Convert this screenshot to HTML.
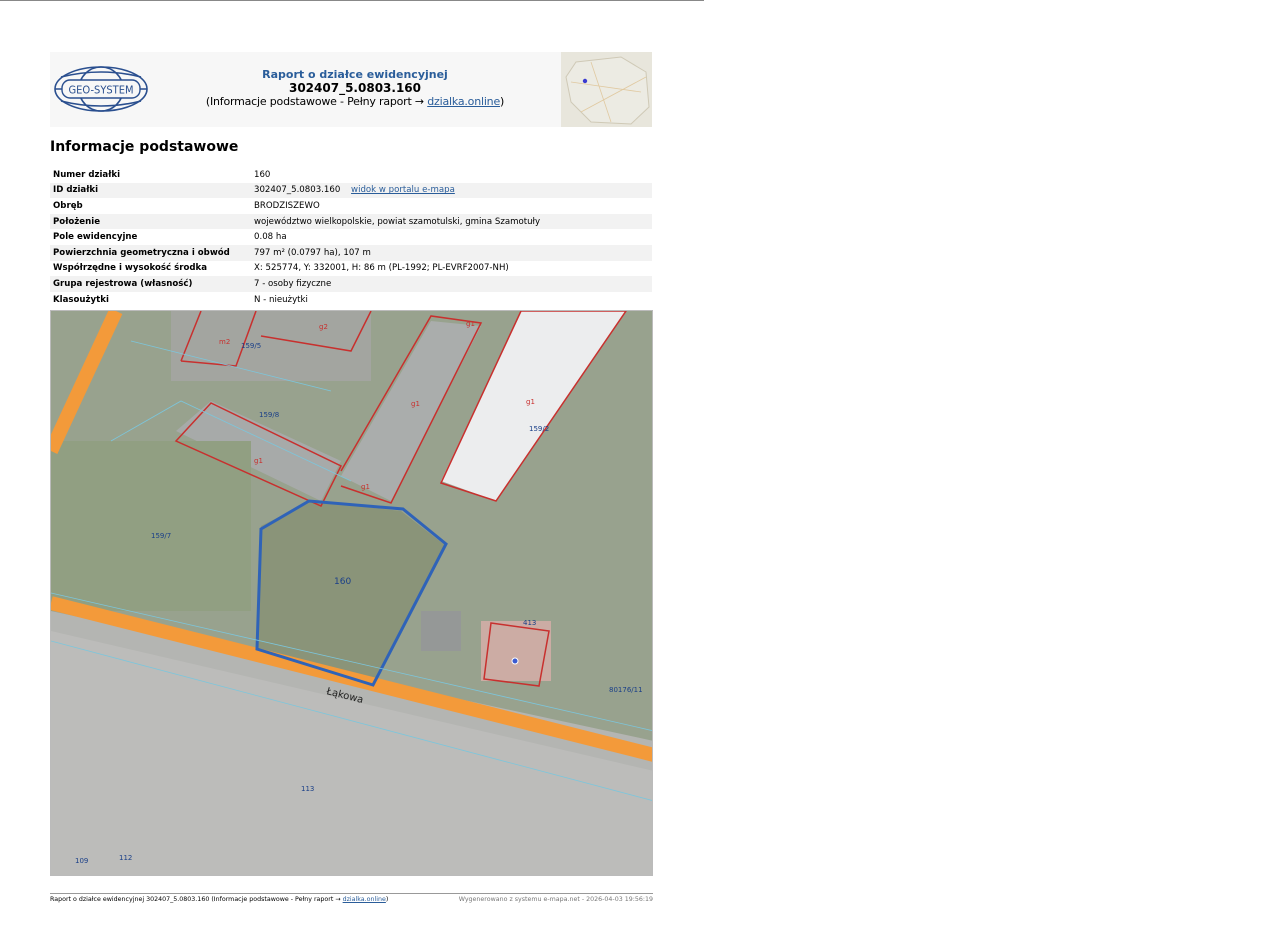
<!DOCTYPE html>
<html><head><meta charset="utf-8"><style>
*{margin:0;padding:0;box-sizing:border-box}
body{width:1280px;height:932px;background:#fff;font-family:"DejaVu Sans","Liberation Sans",sans-serif;position:relative;overflow:hidden}
.topline{position:absolute;left:0;top:0;width:704px;height:1px;background:#888}
.hdr{position:absolute;left:50px;top:52px;width:602px;height:75px;background:#f7f7f7}
.ttl{position:absolute;left:100px;top:16px;width:410px;text-align:center;font-size:11px;line-height:13.5px;white-space:nowrap}
.ttl .a{color:#2a5d9a;font-weight:bold}
.ttl .b{font-weight:bold;font-size:12px}
.ttl .c{letter-spacing:-0.2px}
.ttl a{color:#2a5d9a;text-decoration:underline}
h2{position:absolute;left:50px;top:139px;font-size:14px;font-weight:bold}
table{position:absolute;left:50px;top:167px;width:602px;border-collapse:collapse;font-size:8.6px}
td{height:15.6px;padding:0 3px;white-space:nowrap}
td:first-child{font-weight:bold;width:201px}
tr:nth-child(even){background:#f2f2f2}
td a{color:#2a5d9a;margin-left:8px;text-decoration:underline}
.map{position:absolute;left:50px;top:310px;width:603px;height:566px;border:1px solid #bbb;overflow:hidden}
.foot{position:absolute;left:50px;top:893px;width:603px;border-top:1px solid #999;font-size:6.3px;padding-top:2px;color:#000}
.foot span{float:right;color:#777}
.foot a{color:#2a5d9a;text-decoration:underline}
</style></head><body>
<div class="topline"></div>
<div class="hdr">
<svg style="position:absolute;left:3px;top:13px" width="96" height="48" viewBox="0 0 96 48">
<g fill="none" stroke="#2a4f8f" stroke-width="1.6">
<ellipse cx="48" cy="24" rx="46" ry="22"/>
<ellipse cx="48" cy="24" rx="22" ry="22"/>
<path d="M8 12 Q48 2 88 12 M8 36 Q48 46 88 36 M2 24 H94"/>
</g>
<rect x="9" y="15" width="78" height="18" rx="8" fill="#f7f7f7" stroke="#2a4f8f" stroke-width="1.4"/>
<text x="48" y="28.5" text-anchor="middle" font-size="11" fill="#2a4f8f" font-family="DejaVu Sans Condensed,DejaVu Sans,sans-serif">GEO-SYSTEM</text>
</svg>
<div class="ttl"><div class="a">Raport o działce ewidencyjnej</div><div class="b">302407_5.0803.160</div><div class="c">(Informacje podstawowe - Pełny raport → <a>dzialka.online</a>)</div></div>
<svg style="position:absolute;left:511px;top:0" width="91" height="75"><rect width="91" height="75" fill="#e8e6dc"/><path d="M15 10 L60 5 L85 20 L88 55 L70 72 L30 70 L10 50 L5 25Z" fill="#ecebe3" stroke="#cfc9b6"/><path d="M10 30 L80 40 M30 10 L50 70 M20 60 L85 25" stroke="#e0c9a0" stroke-width="0.8"/><circle cx="24" cy="29" r="2.2" fill="#3a3ad0"/></svg>
</div>
<h2>Informacje podstawowe</h2>
<table>
<tr><td>Numer działki</td><td>160</td></tr>
<tr><td>ID działki</td><td>302407_5.0803.160 <a>widok w portalu e-mapa</a></td></tr>
<tr><td>Obręb</td><td>BRODZISZEWO</td></tr>
<tr><td>Położenie</td><td>województwo wielkopolskie, powiat szamotulski, gmina Szamotuły</td></tr>
<tr><td>Pole ewidencyjne</td><td>0.08 ha</td></tr>
<tr><td>Powierzchnia geometryczna i obwód</td><td>797 m² (0.0797 ha), 107 m</td></tr>
<tr><td>Współrzędne i wysokość środka</td><td>X: 525774, Y: 332001, H: 86 m (PL-1992; PL-EVRF2007-NH)</td></tr>
<tr><td>Grupa rejestrowa (własność)</td><td>7 - osoby fizyczne</td></tr>
<tr><td>Klasoużytki</td><td>N - nieużytki</td></tr>
</table>
<div class="map">
<svg width="603" height="566" viewBox="0 0 603 566">
<rect width="603" height="566" fill="#98a28e"/>
<path d="M0 300 L603 430 L603 566 L0 566Z" fill="#b4b5b2"/>
<path d="M0 320 L603 460 L603 566 L0 566Z" fill="#bcbcba"/>
<rect x="120" y="0" width="200" height="70" fill="#a3a5a0"/>
<path d="M125 120 L160 90 L290 150 L270 190 Z" fill="#a7aaa9"/>
<path d="M290 165 L380 10 L430 15 L340 190 Z" fill="#aaadac"/>
<path d="M390 170 L470 0 L575 0 L445 190 Z" fill="#ecedee"/>
<path d="M210 215 L260 190 L350 200 L395 235 L320 375 L205 338 Z" fill="#8a9479"/>
<rect x="0" y="130" width="200" height="170" fill="#919f82"/>
<rect x="430" y="310" width="70" height="60" fill="#ccaca4"/>
<rect x="370" y="300" width="40" height="40" fill="#959897"/>
<g fill="none" stroke="#f39a3a" stroke-width="14"><path d="M0 292 L603 444"/><path d="M65 0 L0 140"/></g>
<g fill="none" stroke="#c8302e" stroke-width="1.5">
<path d="M130 50 L150 0 M130 50 L185 55 L205 0"/>
<path d="M210 25 L300 40 L320 0"/>
<path d="M125 130 L160 92 L290 155 L270 195 Z"/>
<path d="M290 160 L380 5 L430 12 L340 192 L290 175"/>
<path d="M390 172 L470 0 L575 0 L445 190 Z"/>
<path d="M440 312 L498 320 L488 375 L433 368 Z"/>
</g>
<path d="M210 218 L258 190 L352 198 L395 233 L322 374 L206 338 Z" fill="none" stroke="#2f63b8" stroke-width="3"/>
<g fill="none" stroke="#7cc6dc" stroke-width="0.8"><path d="M0 330 L603 490"/><path d="M0 282 L603 420"/><path d="M80 30 L280 80 M60 130 L130 90 L300 170"/></g>
<g font-family="DejaVu Sans,sans-serif" font-size="7" fill="#1a3f88">
<text x="283" y="273" font-size="9">160</text>
<text x="100" y="227">159/7</text><text x="208" y="106">159/8</text><text x="190" y="37">159/5</text>
<text x="478" y="120">159/2</text><text x="250" y="480">113</text><text x="558" y="381">80176/11</text>
<text x="68" y="549">112</text><text x="24" y="552">109</text><text x="472" y="314">413</text>
</g>
<g font-family="DejaVu Sans,sans-serif" font-size="7" fill="#c8302e"><text x="268" y="18">g2</text><text x="415" y="15">g1</text><text x="360" y="95">g1</text><text x="475" y="93">g1</text><text x="203" y="152">g1</text><text x="310" y="178">g1</text><text x="168" y="33">m2</text></g>
<text x="275" y="383" font-size="10" fill="#222" transform="rotate(14 275 383)" font-family="DejaVu Sans,sans-serif">Łąkowa</text>
<circle cx="464" cy="350" r="3" fill="#3a5ad0" stroke="#fff"/>
</svg>
</div>
<div class="foot">Raport o działce ewidencyjnej 302407_5.0803.160 (Informacje podstawowe - Pełny raport → <a>dzialka.online</a>)<span>Wygenerowano z systemu e-mapa.net - 2026-04-03 19:56:19</span></div>
</body></html>
